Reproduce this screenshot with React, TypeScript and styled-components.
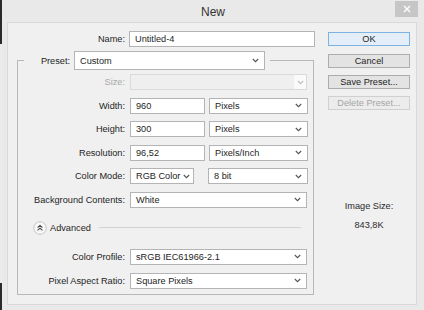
import React from 'react';
import styled, { createGlobalStyle } from 'styled-components';

const GlobalStyle = createGlobalStyle`
  html, body {
    margin: 0;
    padding: 0;
  }
  body {
    width: 424px;
    height: 310px;
    overflow: hidden;
    background:
      linear-gradient(#2a2a2a, #2a2a2a) 0 0 / 2px 44px no-repeat,
      linear-gradient(#2a2a2a, #2a2a2a) 0 283px / 2px 27px no-repeat,
      #ebebeb;
    font-family: 'Liberation Sans', Arial, sans-serif;
    font-size: 9.2px;
    color: #1e1e1e;
  }
`;

const Window = styled.div`
  margin-left: 2px;
  width: 422px;
  height: 310px;
  background: #e9e9e9;
  display: flex;
  flex-direction: column;
`;

const TitleBar = styled.div`
  height: 22px;
  display: grid;
  grid-template-columns: 1fr auto 1fr;
  align-items: center;
`;

const Title = styled.div`
  grid-column: 2;
  font-size: 12px;
  color: #333;
  padding-top: 2px;
`;

const CloseButton = styled.div`
  grid-column: 3;
  justify-self: end;
  align-self: start;
  margin: 1px 6px 0 0;
  width: 23px;
  height: 16px;
  background: #c6c6c6;
  display: flex;
  align-items: center;
  justify-content: center;
`;

const Panel = styled.div`
  margin: 0 7px 5px 5px;
  flex: 1;
  border: 1px solid #d9d9d9;
  background: #f0f0f0;
  padding: 8px 0 0 9px;
  display: grid;
  grid-template-columns: 299px 82px;
  column-gap: 12px;
  align-items: start;
`;

const LeftColumn = styled.div`
  display: flex;
  flex-direction: column;
`;

const NameRow = styled.div`
  display: grid;
  grid-template-columns: 108px 186px;
  column-gap: 4px;
  align-items: center;
`;

const Label = styled.label<{ $disabled?: boolean }>`
  text-align: right;
  white-space: nowrap;
  color: ${p => (p.$disabled ? '#a8a8a8' : '#1e1e1e')};
`;

const TextBox = styled.div<{ $w?: number }>`
  height: 16px;
  box-sizing: border-box;
  width: ${p => (p.$w ? `${p.$w}px` : 'auto')};
  border: 1px solid #b4b4b4;
  background: #fff;
  padding: 0 5px;
  display: flex;
  align-items: center;
  white-space: nowrap;
  overflow: hidden;
`;

const SelectBox = styled(TextBox)<{ $h?: number }>`
  height: ${p => (p.$h ? `${p.$h}px` : '16px')};
  justify-content: space-between;
  gap: 3px;
  padding-right: 5px;
`;

const DisabledSelect = styled.div`
  height: 16px;
  box-sizing: border-box;
  border: 1px solid #dadada;
  background: #efefef;
  display: flex;
  justify-content: flex-end;
`;

const DisabledArrow = styled.div`
  width: 12px;
  background: #fafafa;
  display: flex;
  align-items: center;
  justify-content: center;
`;

const Group = styled.fieldset`
  margin: 4px 0 0;
  width: 297px;
  box-sizing: border-box;
  border: 1px solid #b8b8b8;
  padding: 0 5px 5px 6px;
`;

const Legend = styled.legend`
  padding: 0 5px 0 0;
  display: flex;
  align-items: center;
  gap: 4px;
`;

const LegendLabel = styled(Label)`
  width: 46px;
`;

const FormGrid = styled.div<{ $top: number }>`
  margin-top: ${p => p.$top}px;
  display: grid;
  grid-template-columns: 101px 177px;
  column-gap: 5px;
  row-gap: 7.6px;
  align-items: center;
`;

const Pair = styled.div<{ $cols: string; $gap: number }>`
  display: grid;
  grid-template-columns: ${p => p.$cols};
  column-gap: ${p => p.$gap}px;
`;

const AdvancedRow = styled.div`
  margin: 13px 7px 0 9px;
  height: 14px;
  display: flex;
  align-items: center;
  gap: 3px;
`;

const AdvancedLine = styled.div`
  flex: 1;
  height: 1px;
  margin-left: 5px;
  background: #d2d2d2;
`;

const RightColumn = styled.div`
  display: flex;
  flex-direction: column;
  padding-top: 1px;
`;

const ButtonStack = styled.div`
  display: flex;
  flex-direction: column;
  gap: 7px;
`;

const Button = styled.div<{ $primary?: boolean; $disabled?: boolean }>`
  height: 14px;
  box-sizing: border-box;
  display: flex;
  align-items: center;
  justify-content: center;
  border: 1px solid ${p => (p.$primary ? '#7db3e3' : p.$disabled ? '#d0d0d0' : '#adadad')};
  background: ${p => (p.$primary ? '#e3eef8' : p.$disabled ? '#ececec' : '#e3e3e3')};
  color: ${p => (p.$disabled ? '#a6a6a6' : '#1e1e1e')};
  margin-bottom: ${p => (p.$primary ? '1px' : '0')};
`;

const ImageSize = styled.div`
  margin-top: 90px;
  display: flex;
  flex-direction: column;
  align-items: center;
  gap: 6px;
  line-height: 13px;
  color: #2a2a2a;
`;

const Chevron = ({ color = '#555' }: { color?: string }) => (
  <svg width="7" height="5" viewBox="0 0 7 5" style={{ flexShrink: 0 }}>
    <path d="M0.8 1 L3.5 3.7 L6.2 1" fill="none" stroke={color} strokeWidth="1.1" />
  </svg>
);

const Select = ({ value, w, h }: { value: string; w?: number; h?: number }) => (
  <SelectBox $w={w} $h={h}>
    <span>{value}</span>
    <Chevron />
  </SelectBox>
);

const AdvancedIcon = () => (
  <svg width="14" height="14" viewBox="0 0 14 14">
    <circle cx="7" cy="7" r="6.3" fill="#f7f7f7" stroke="#c4c4c4" />
    <path d="M4.6 6.6 L7 4.4 L9.4 6.6 M4.6 9.4 L7 7.2 L9.4 9.4" fill="none" stroke="#444" strokeWidth="1.1" />
  </svg>
);

export default function App() {
  return (
    <>
      <GlobalStyle />
      <Window>
        <TitleBar>
          <Title>New</Title>
          <CloseButton>
            <svg width="8" height="8" viewBox="0 0 8 8">
              <path d="M1 1 L7 7 M7 1 L1 7" stroke="#fff" strokeWidth="1.4" />
            </svg>
          </CloseButton>
        </TitleBar>
        <Panel>
          <LeftColumn>
            <NameRow>
              <Label>Name:</Label>
              <TextBox>Untitled-4</TextBox>
            </NameRow>
            <Group>
              <Legend>
                <LegendLabel>Preset:</LegendLabel>
                <Select value="Custom" w={191} h={19} />
              </Legend>
              <FormGrid $top={4}>
                <Label $disabled>Size:</Label>
                <DisabledSelect>
                  <DisabledArrow>
                    <Chevron color="#bdbdbd" />
                  </DisabledArrow>
                </DisabledSelect>

                <Label>Width:</Label>
                <Pair $cols="75px 99px" $gap={4}>
                  <TextBox>960</TextBox>
                  <Select value="Pixels" />
                </Pair>

                <Label>Height:</Label>
                <Pair $cols="75px 99px" $gap={4}>
                  <TextBox>300</TextBox>
                  <Select value="Pixels" />
                </Pair>

                <Label>Resolution:</Label>
                <Pair $cols="75px 99px" $gap={4}>
                  <TextBox>96,52</TextBox>
                  <Select value="Pixels/Inch" />
                </Pair>

                <Label>Color Mode:</Label>
                <Pair $cols="64px 100px" $gap={14}>
                  <Select value="RGB Color" />
                  <Select value="8 bit" />
                </Pair>

                <Label>Background Contents:</Label>
                <Select value="White" />
              </FormGrid>

              <AdvancedRow>
                <AdvancedIcon />
                <span>Advanced</span>
                <AdvancedLine />
              </AdvancedRow>

              <FormGrid $top={14}>
                <Label>Color Profile:</Label>
                <Select value="sRGB IEC61966-2.1" />
                <Label>Pixel Aspect Ratio:</Label>
                <Select value="Square Pixels" />
              </FormGrid>
            </Group>
          </LeftColumn>

          <RightColumn>
            <ButtonStack>
              <Button $primary>OK</Button>
              <Button>Cancel</Button>
              <Button>Save Preset...</Button>
              <Button $disabled>Delete Preset...</Button>
            </ButtonStack>
            <ImageSize>
              <span>Image Size:</span>
              <span>843,8K</span>
            </ImageSize>
          </RightColumn>
        </Panel>
      </Window>
    </>
  );
}
